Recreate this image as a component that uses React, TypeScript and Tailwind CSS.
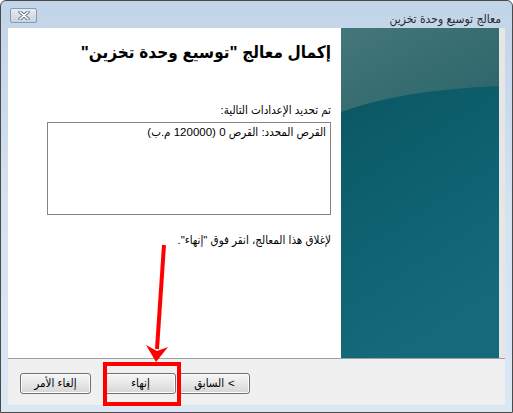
import React from "react";

function WizButton({ children }: { children: React.ReactNode }) {
  return (
    <button
      dir="ltr"
      className="w-[71px] h-[21px] rounded-[3px] border border-[#707070] bg-gradient-to-b from-[#f6f6f6] via-[#e8e8e8] to-[#d6d6d6] text-black leading-none shadow-[inset_0_0_0_1px_#fcfcfc] flex flex-row items-center justify-center gap-[4px]"
    >
      {children}
    </button>
  );
}

function TealPanel() {
  return (
    <div className="relative w-[158px] overflow-hidden">
      <svg className="absolute inset-0" width="158" height="330" viewBox="0 0 158 330">
        <defs>
          <linearGradient id="top" x1="0" y1="0" x2="1" y2="1">
            <stop offset="0" stopColor="#44777a" />
            <stop offset="1" stopColor="#2a6469" />
          </linearGradient>
          <linearGradient id="body" x1="0" y1="0" x2="0.3" y2="1">
            <stop offset="0" stopColor="#0a525d" />
            <stop offset="0.5" stopColor="#0d5f6d" />
            <stop offset="1" stopColor="#14697b" />
          </linearGradient>
        </defs>
        <rect width="158" height="330" fill="url(#body)" />
        <path d="M0 0 H158 V58 Q60 62 0 84 Z" fill="url(#top)" />
      </svg>
    </div>
  );
}

export default function App() {
  return (
    <div
      className="relative w-[513px] h-[413px] overflow-hidden rounded-t-[6px] border border-[#4a4a4a] bg-gradient-to-b from-[#c2d4e8] via-[#d5e2f0] to-[#dce7f4] flex flex-col"
      style={{ fontFamily: '"Liberation Sans", "DejaVu Sans Condensed", "DejaVu Sans", sans-serif' }}
    >
      {/* title bar */}
      <div className="h-[27px] flex items-center justify-between pl-[9px] pr-[11px]">
        <div className="w-[27px] h-[15px] mt-[2px] rounded-[2px] border border-[#8d99a8] bg-gradient-to-b from-[#e4ebf3] to-[#c8d4e2] flex items-center justify-center">
          <svg width="14" height="9" viewBox="0 0 14 9">
            <path d="M3 1 L11 8 M11 1 L3 8" stroke="#6d7885" strokeWidth="3.4" strokeLinecap="round" />
            <path d="M3 1 L11 8 M11 1 L3 8" stroke="#ffffff" strokeWidth="1.6" strokeLinecap="round" />
          </svg>
        </div>
        <div dir="rtl" className="text-[12px] text-[#2a2a2a] mt-[9px]">
          معالج توسيع وحدة تخزين
        </div>
      </div>

      {/* client area */}
      <div className="mx-[7px] flex flex-col">
        <div className="h-[330px] flex bg-white">
          <div dir="rtl" className="w-[333px] flex flex-col pr-[10px] text-black text-[11.5px]">
            <h1 className="mt-[12px] text-[17px] font-bold leading-[26px]">
              إكمال معالج "توسيع وحدة تخزين"
            </h1>
            <p className="mt-[37px] leading-[14px]">تم تحديد الإعدادات التالية:</p>
            <div className="mt-[5px] ml-[39px] h-[93px] border border-[#858585] bg-white pr-[4px] pt-[2px] leading-[14px]">
              القرص المحدد: القرص 0 (120000 م.ب)
            </div>
            <p className="mt-[18px] leading-[14px]">لإغلاق هذا المعالج، انقر فوق "إنهاء".</p>
          </div>
          <TealPanel />
          <div className="w-[6px] bg-[#e6e6e6]" />
        </div>
        <div className="h-[47px] border-t border-[#a0a0a0] bg-[#f0f0f0] flex items-start pt-[14px] pl-[12px] gap-[14px] text-[11.5px]">
          <WizButton>
            <span dir="rtl">إلغاء الأمر</span>
          </WizButton>
          <div className="flex gap-[3px]">
            <WizButton>
              <span dir="rtl">إنهاء</span>
            </WizButton>
            <WizButton>
              <span dir="rtl">السابق</span>
              <span>&lt;</span>
            </WizButton>
          </div>
        </div>
      </div>

      {/* annotation: red box and arrow */}
      <div className="absolute left-[102px] top-[361px] w-[78px] h-[44px] border-[4px] border-[#f00]" />
      <svg className="absolute left-[140px] top-[240px]" width="32" height="125" viewBox="0 0 32 125">
        <path d="M23 4 L16 108" stroke="#f00" strokeWidth="4" />
        <path d="M5 104 L15 121 L27 106 L16 110 Z" fill="#f00" />
      </svg>
    </div>
  );
}
